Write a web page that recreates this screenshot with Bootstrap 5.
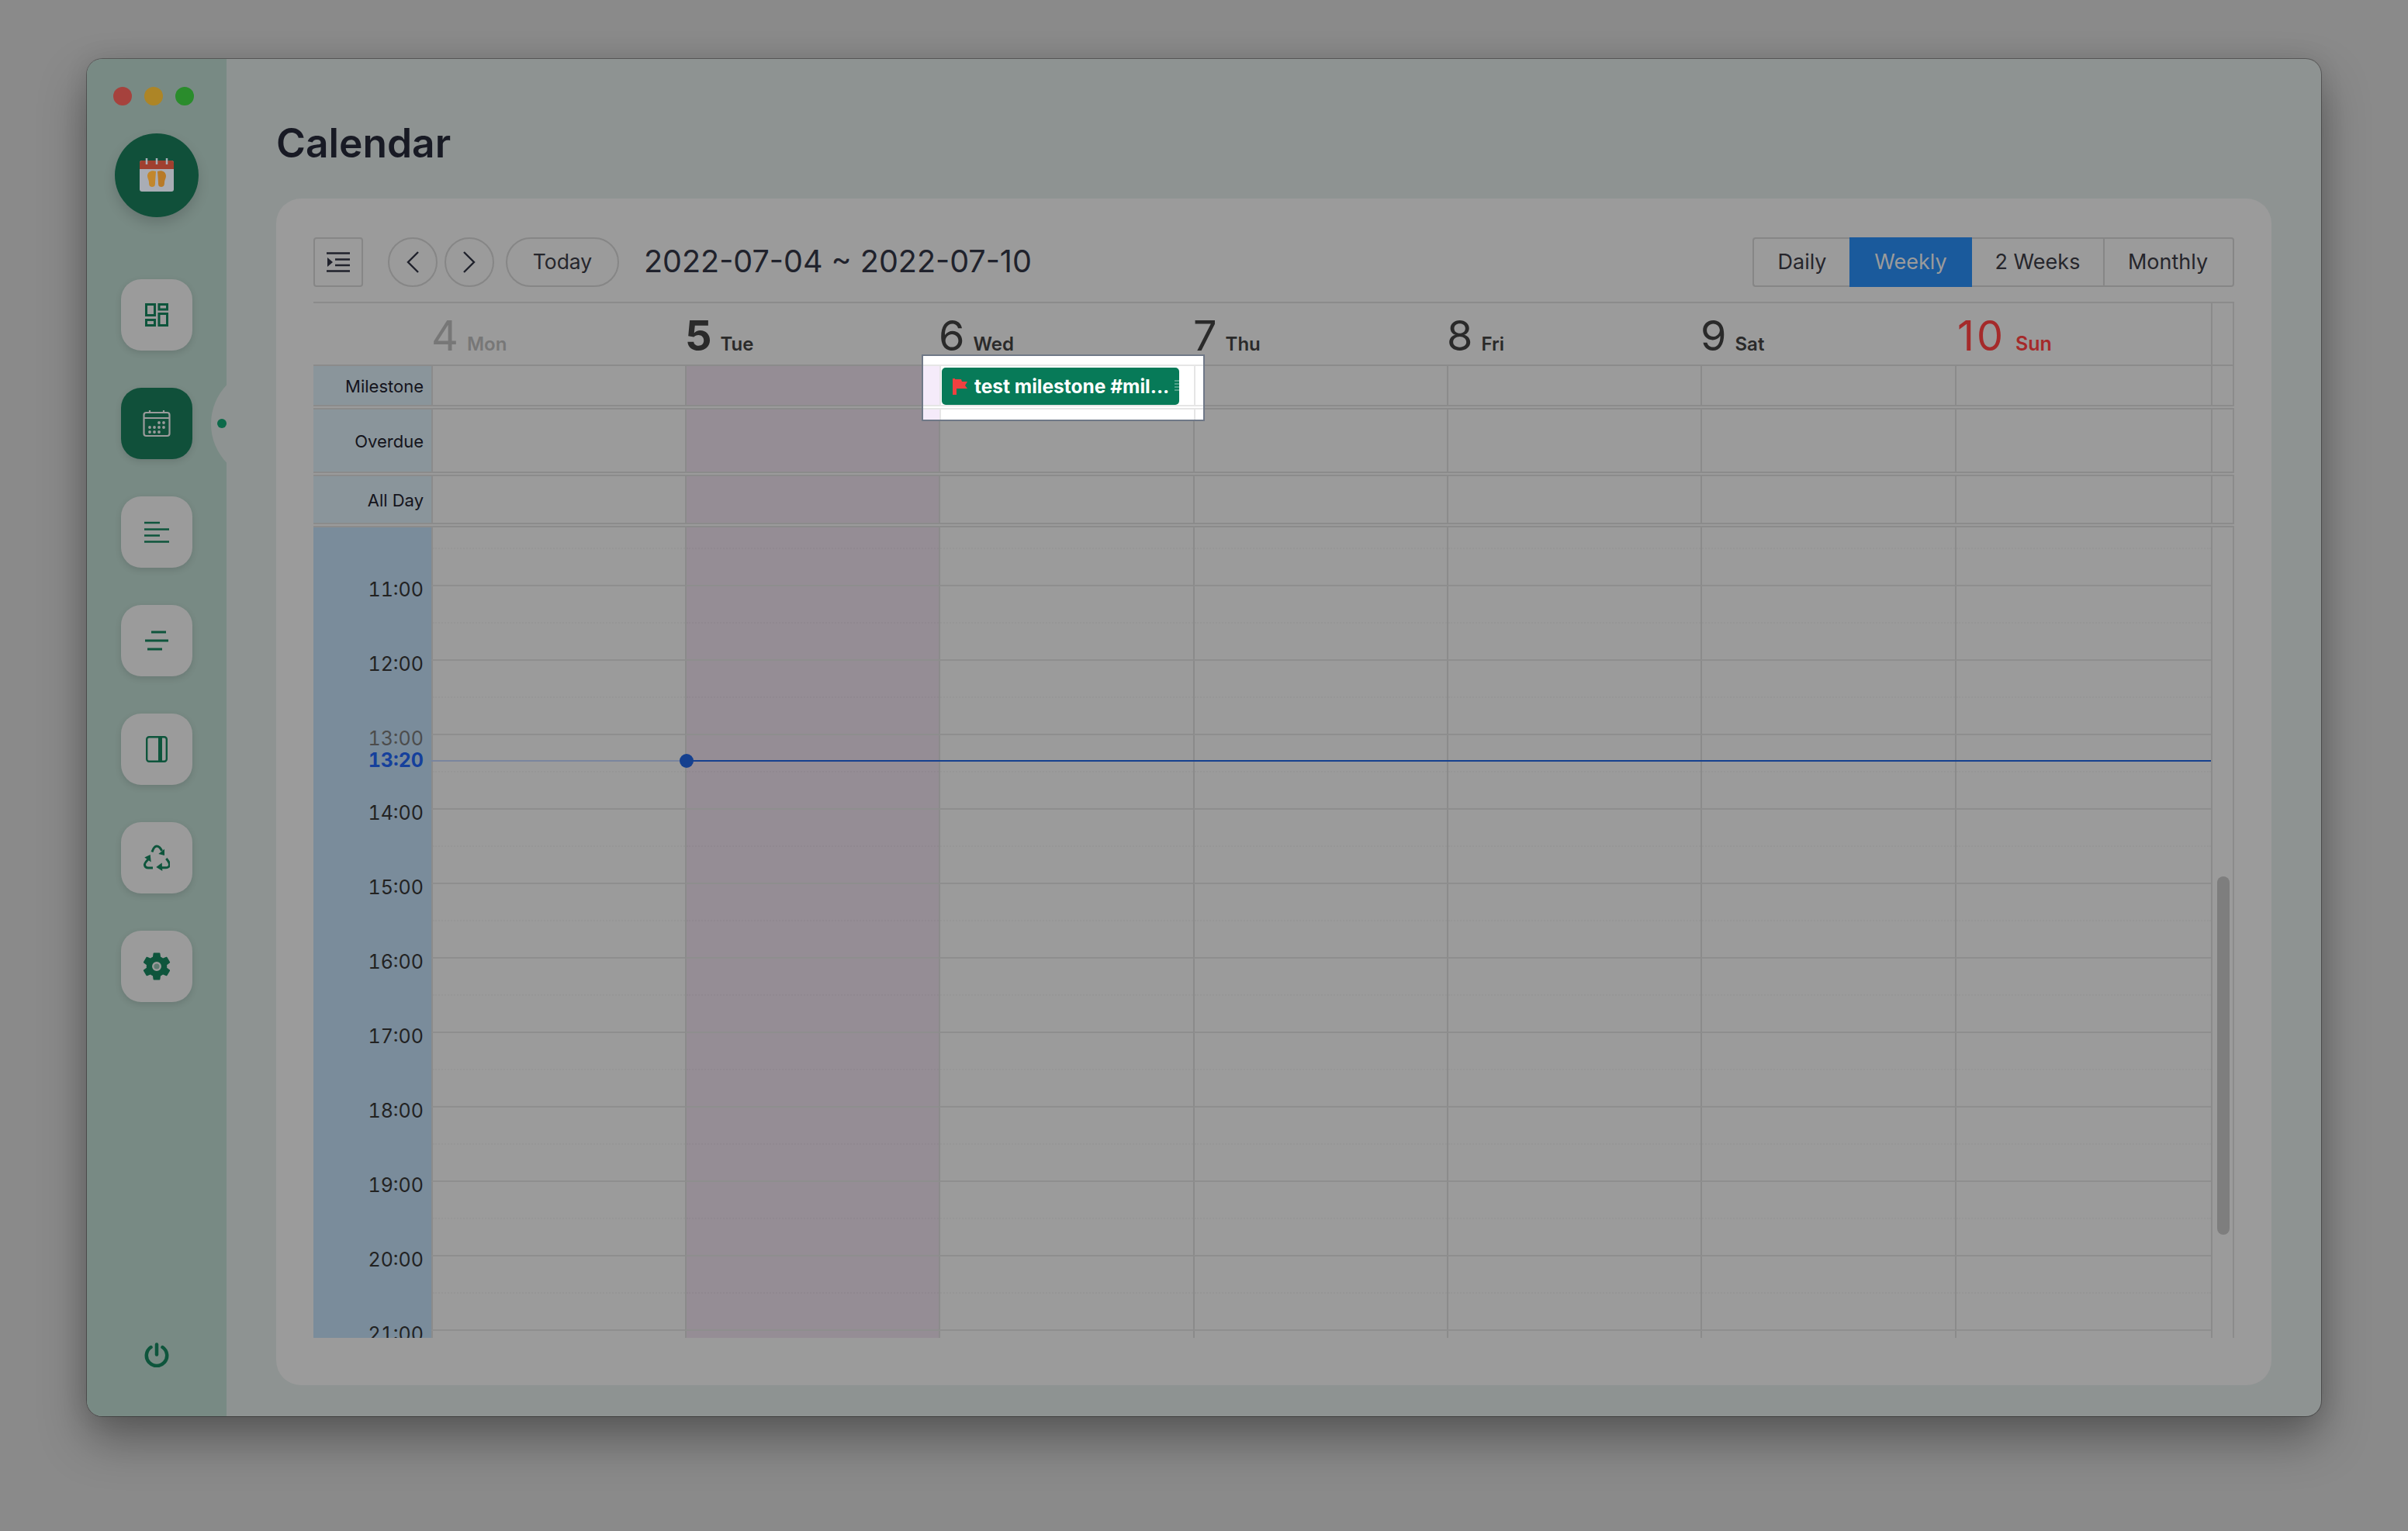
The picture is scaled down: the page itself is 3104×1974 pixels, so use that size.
<!DOCTYPE html>
<html lang="en">
<head>
  <meta charset="UTF-8">
  <title>Calendar</title>
  <link href="https://cdn.jsdelivr.net/npm/bootstrap@5.3.3/dist/css/bootstrap.min.css" rel="stylesheet">
  <style>
    :root { --cols: 152px 327px 327px 328px 327px 327px 328px 330px 30px; --line: #8b8b8b; --green: #0e553c; }
    html { height: 100%; overflow: hidden; }
    body { height: 100%; overflow: hidden; background: #8a8a8a; font-family: Inter, "Liberation Sans", sans-serif; color: #20222c; padding: 76px 112px 148px; }
    .app-window { height: 1750px; border-radius: 20px; overflow: hidden; background: #8e9392; box-shadow: 0 30px 60px rgba(0,0,0,.35), 0 0 30px rgba(0,0,0,.1), 0 0 0 1px rgba(0,0,0,.3); }
    .side-rail { width: 180px; background: #788a84; position: relative; overflow: hidden; padding-top: 36px; flex: none; }
    .light { width: 24px; height: 24px; border-radius: 50%; }
    .lights { margin-left: 34px; gap: 16px; }
    .app-logo { width: 108px; height: 108px; border-radius: 50%; background: #10503a; margin: 36px auto 0; box-shadow: 0 8px 16px rgba(0,0,0,.15); }
    .rail-nav { margin-top: 80px; gap: 48px; }
    .rail-btn { width: 92px; height: 92px; border-radius: 26px; background: #9b9b9b; box-shadow: 0 3px 8px rgba(0,0,0,.12); color: var(--green); }
    .rail-btn.on { background: #10503a; color: #9b9b9b; }
    .rail-bump { position: absolute; width: 145px; height: 145px; border-radius: 50%; background: #8e9392; left: 160px; top: 398px; }
    .rail-dot { position: absolute; width: 12px; height: 12px; border-radius: 50%; background: #0d6a4a; left: 168px; top: 464px; }
    .rail-power { margin-top: auto; padding-bottom: 63px; color: var(--green); }
    .main-pane { padding: 72px 64px 40px; min-width: 0; }
    .page-title { font-size: 51.5px; font-weight: 600; line-height: 70px; margin: 1px 0 37px; color: #181a24; }
    .cal-card { background: #9b9b9b; border-radius: 32px; padding: 50px 48px 61px; height: 1530px; }
    .tool-row { height: 64px; margin-bottom: 19px; }
    .tool-btn { height: 64px; border: 2px solid #868686; background: transparent; color: #20222c; padding: 0; display: flex; align-items: center; justify-content: center; }
    .tool-btn:hover { background: transparent; }
    .tool-side { width: 64px; border-radius: 4px; margin-right: 32px; }
    .tool-round { width: 64px; border-radius: 50%; margin-right: 9px; }
    .tool-today { width: 146px; border-radius: 32px; font-size: 26.5px; color: #26262c; margin: 0 32px 0 6px; }
    .range-title { font-size: 39.5px; font-weight: 400; margin: 0; color: #20222c; }
    .view-tabs .btn { font-size: 27px; height: 64px; padding: 0; margin: 0; border: 2px solid #868686; color: #26262c; background: transparent; border-radius: 4px; line-height: 58px; }
    .view-tabs .btn.active { background: #1a5a9c; border-color: #1a5a9c; color: #9b9b9b; }
    .tab-a { width: 126px; border-right: 0 !important; }
    .tab-b { width: 158px; }
    .tab-c { width: 171px; border-left: 0 !important; border-right: 0 !important; }
    .view-tabs .tab-d { width: 169px; padding-right: 2px; }
    .cal-head, .cal-band, .hour-row { display: grid; grid-template-columns: var(--cols); }
    .cal-head { height: 81px; border-top: 2px solid var(--line); }
    .day-head { display: flex; align-items: baseline; gap: 11px; padding-top: 11px; color: #2a2a2a; }
    .day-num { font-size: 54px; line-height: 62px; }
    .day-name { font-size: 24px; font-weight: 600; }
    .day-head.past { color: #777; }
    .day-head.today .day-num { font-weight: 700; }
    .day-head.sun { color: #a52a2a; padding-left: 3px; gap: 13px; }
    .day-head.sun .day-num { letter-spacing: 3px; }
    .day-head.sun .day-name { font-size: 25px; }
    .strip-cell { border-left: 2px solid var(--line); border-right: 2px solid var(--line); }
    .cal-band { border-top: 2px solid var(--line); border-bottom: 2px solid var(--line); margin-bottom: 2px; }
    .band-label { background: #8a959b; font-size: 22px; display: flex; align-items: center; justify-content: flex-end; padding: 3px 10px 0 0; color: #14141c; }
    .day-cell { border-left: 2px solid var(--line); }
    .day-cell.tue { background: #958d95; }
    .time-area { height: 1047px; overflow: hidden; position: relative; border-top: 2px solid var(--line); }
    .hour-row { height: 96px; }
    .hour-row.first { height: 76px; }
    .hour-row .day-cell { border-bottom: 2px solid #8e8e8e; }
    .half-mark { height: 48px; border-bottom: 2px dotted rgba(0,0,0,.03); }
    .first .half-mark { height: 28px; }
    .hour-label { background: #7a8c9b; font-size: 25px; font-variant-numeric: tabular-nums; text-align: right; padding-right: 10px; color: #222; }
    .hour-label span { display: block; line-height: 30px; margin-top: -11px; }
    .hour-label .dim { color: #4c4c4c; }
    .now-line { position: absolute; left: 152px; right: 30px; top: 300px; height: 2px; background: linear-gradient(to right, #7a859e 0 327px, #15408f 327px); }
    .now-dot { position: absolute; left: 472px; top: 292px; width: 18px; height: 18px; border-radius: 50%; background: #15408f; }
    .now-label { position: absolute; right: calc(100% - 142px); top: 285px; font-size: 25px; font-variant-numeric: tabular-nums; line-height: 30px; font-weight: 700; color: #15409c; }
    .scroll-thumb { position: absolute; left: 2454px; top: 450px; width: 16px; height: 462px; border-radius: 8px; background: #7e7e7e; }
    .cal-wrap { position: relative; }
    .spot-box { position: absolute; left: 784px; top: 68px; width: 365px; height: 86px; border: 2px solid #6f7887; background: #fff; padding-top: 11px; }
    .spot-row { display: grid; grid-template-columns: 21px 328px 12px; border-top: 2px solid #e6e6e6; border-bottom: 2px solid #e6e6e6; height: 54px; margin-bottom: 2px; }
    .spot-tail { display: grid; grid-template-columns: 21px 328px 12px; border-top: 2px solid #e6e6e6; height: 15px; }
    .spot-cell { border-left: 2px solid #e6e6e6; }
    .spot-tint { background: #f5ebfa; }
    .chip { width: 306px; height: 48px; margin: 2px 0 0 1px; background: #077a58; color: #fff; border-radius: 5px; font-size: 24.5px; font-weight: 700; line-height: 48px; padding-left: 13px; gap: 8px; position: relative; white-space: nowrap; }
    .chip-grip { position: absolute; right: 0; top: 16px; width: 6px; height: 16px; background: repeating-linear-gradient(to bottom, rgba(255,255,255,.3) 0 2px, transparent 2px 4px); }
  </style>
</head>
<body>

<div class="app-window d-flex">
  <div class="side-rail d-flex flex-column">
    <div class="lights d-flex">
      <div class="light" style="background:#a6423d"></div>
      <div class="light" style="background:#ad8526"></div>
      <div class="light" style="background:#2a8c2c"></div>
    </div>
    <div class="app-logo d-flex align-items-center justify-content-center">
      <svg width="46" height="44" viewBox="0 0 46 44">
        <rect x="1" y="3" width="44" height="40" rx="3" fill="#a9adb5"/>
        <path d="M1 14V6a3 3 0 0 1 3-3h38a3 3 0 0 1 3 3v8z" fill="#a0402f"/>
        <path d="M10 0v8M23 0v8M36 0v8" stroke="#a9adb5" stroke-width="2.500"/>
        <path d="M22 17c-6-2-11 1-11 6 0 3 2 5 2 8 0 2 0 6 4 6s4-3 4-6z" fill="#c2872c"/>
        <path d="M24 17c6-2 11 1 11 6 0 3-2 5-2 8 0 2 0 6-4 6s-4-3-4-6z" fill="#b87a28"/>
      </svg>
    </div>
    <div class="rail-bump"></div>
    <div class="rail-dot"></div>
    <div class="rail-nav d-flex flex-column align-items-center">
      <div class="rail-btn d-flex align-items-center justify-content-center">
        <svg width="30" height="30" viewBox="0 0 30 30" fill="none" stroke="currentColor" stroke-width="3"><rect x="1.500" y="1.500" width="11" height="14"/><rect x="18" y="1.500" width="10.500" height="6.500"/><rect x="1.500" y="21.500" width="11" height="7"/><rect x="18" y="13.500" width="10.500" height="15"/></svg>
      </div>
      <div class="rail-btn on d-flex align-items-center justify-content-center">
        <svg width="36" height="36" viewBox="0 0 36 36" fill="none" stroke="currentColor" stroke-width="2.200"><rect x="1.500" y="4" width="33" height="30" rx="3"/><path d="M1.500 11h33M9 1v4M27 1v4"/><g fill="currentColor" stroke="none"><circle cx="21" cy="17" r="1.900"/><circle cx="27" cy="17" r="1.900"/><circle cx="9" cy="23" r="1.900"/><circle cx="15" cy="23" r="1.900"/><circle cx="21" cy="23" r="1.900"/><circle cx="27" cy="23" r="1.900"/><circle cx="9" cy="29" r="1.900"/><circle cx="15" cy="29" r="1.900"/><circle cx="21" cy="29" r="1.900"/></g></svg>
      </div>
      <div class="rail-btn d-flex align-items-center justify-content-center">
        <svg width="32" height="28" viewBox="0 0 32 28" stroke="currentColor" stroke-width="2.500"><path d="M0 2h20M0 10.500h32M0 18.500h20M0 26.500h32"/></svg>
      </div>
      <div class="rail-btn d-flex align-items-center justify-content-center">
        <svg width="30" height="26" viewBox="0 0 30 26" stroke="currentColor" stroke-width="3"><path d="M8 2h19M0 13h30M3 24h19"/></svg>
      </div>
      <div class="rail-btn d-flex align-items-center justify-content-center">
        <svg width="28" height="34" viewBox="0 0 28 34" fill="none" stroke="currentColor" stroke-width="2.400"><rect x="1.200" y="1.200" width="25.600" height="31.600" rx="3"/><path d="M18.500 1v32" stroke-width="5"/></svg>
      </div>
      <div class="rail-btn d-flex align-items-center justify-content-center">
        <svg width="34" height="34" viewBox="0 0 34 34" fill="none" stroke="currentColor" stroke-width="3"><path d="M11 9.500C12.500 5 14.500 2 17 2c3 0 5 2.500 6.700 6"/><path d="M27 5.700V14l-7.700-2z" fill="currentColor" stroke="none"/><path d="M6 19c-3 3-5 5-4.500 7.500.5 2.500 2.500 3.500 4.500 3.500h6"/><path d="M1.300 16.400L8.700 13l1 9.500z" fill="currentColor" stroke="none"/><path d="M24 29.800h5c3 0 4.700-2 4.500-4.300-.2-2.300-2-5-4.200-7.500"/><path d="M16.300 29l7.400-5.500.6 10.500z" fill="currentColor" stroke="none"/></svg>
      </div>
      <div class="rail-btn d-flex align-items-center justify-content-center">
        <svg width="44" height="44" viewBox="0 0 24 24"><path fill="currentColor" d="M19.140 12.940c.04-.3.06-.61.06-.94 0-.32-.02-.64-.07-.94l2.030-1.580a.49.49 0 0 0 .12-.61l-1.920-3.320a.488.488 0 0 0-.59-.22l-2.390.96c-.5-.38-1.030-.7-1.620-.94l-.36-2.540a.484.484 0 0 0-.48-.41h-3.840c-.24 0-.43.17-.47.41l-.36 2.540c-.59.24-1.130.57-1.620.94l-2.390-.96c-.22-.08-.47 0-.59.22L2.740 8.870c-.12.21-.08.47.12.61l2.030 1.580c-.05.3-.09.63-.09.94s.02.64.07.94l-2.030 1.580a.49.49 0 0 0-.12.61l1.920 3.320c.12.22.37.29.59.22l2.390-.96c.5.38 1.030.7 1.620.94l.36 2.540c.05.24.24.41.48.41h3.840c.24 0 .44-.17.47-.41l.36-2.540c.59-.24 1.130-.56 1.620-.94l2.390.96c.22.08.47 0 .59-.22l1.920-3.320c.12-.22.07-.47-.12-.61z"/><circle cx="12" cy="12" r="2.600" fill="#5d7b70" stroke="#9b9b9b" stroke-width="1.300"/></svg>
      </div>
    </div>
    <div class="rail-power d-flex justify-content-center">
      <svg width="32" height="32" viewBox="0 0 32 32" fill="none" stroke="currentColor" stroke-width="4.500" stroke-linecap="round"><path d="M16 2.500v13"/><path d="M8.500 6a13.200 13.200 0 1 0 15 0"/></svg>
    </div>
  </div>

  <div class="main-pane flex-grow-1">
    <h1 class="page-title">Calendar</h1>
    <div class="cal-card">
      <div class="tool-row d-flex align-items-center">
        <button class="btn tool-btn tool-side">
          <svg width="30" height="26" viewBox="0 0 30 26" stroke="currentColor" stroke-width="2.600"><path d="M0 1.500h30M11 9.500h19M11 17h19M0 24.500h30"/><path d="M1 7l7 6-7 6z" fill="currentColor" stroke="none"/></svg>
        </button>
        <button class="btn tool-btn tool-round">
          <svg width="18" height="28" viewBox="0 0 18 28" fill="none" stroke="currentColor" stroke-width="2.400"><path d="M16 1L3 14l13 13"/></svg>
        </button>
        <button class="btn tool-btn tool-round">
          <svg width="18" height="28" viewBox="0 0 18 28" fill="none" stroke="currentColor" stroke-width="2.400"><path d="M2 1l13 13L2 27"/></svg>
        </button>
        <button class="btn tool-btn tool-today">Today</button>
        <h2 class="range-title">2022-07-04 ~ 2022-07-10</h2>
        <div class="btn-group view-tabs ms-auto">
          <button class="btn tab-a">Daily</button>
          <button class="btn tab-b active">Weekly</button>
          <button class="btn tab-c">2 Weeks</button>
          <button class="btn tab-d">Monthly</button>
        </div>
      </div>

      <div class="cal-wrap">
        <div class="cal-head" id="calHead"></div>
        <div id="calBands"></div>
        <div class="time-area" id="timeArea">
          <div class="now-line"></div>
          <div class="now-dot"></div>
          <div class="now-label">13:20</div>
          <div class="scroll-thumb"></div>
        </div>

        <div class="spot-box">
          <div class="spot-row">
            <div class="spot-tint"></div>
            <div class="spot-cell">
              <div class="chip d-flex align-items-center">
                <svg width="21" height="22" viewBox="0 0 21 22"><path d="M1 1h3v1h8l1 3h7l-3 5 3 4H6v8H1z" fill="#f04040"/></svg>
                <span>test milestone #mil...</span>
                <div class="chip-grip"></div>
              </div>
            </div>
            <div class="spot-cell"></div>
          </div>
          <div class="spot-tail">
            <div class="spot-tint"></div>
            <div class="spot-cell"></div>
            <div class="spot-cell"></div>
          </div>
        </div>
      </div>
    </div>
  </div>
</div>

<script src="https://cdn.jsdelivr.net/npm/bootstrap@5.3.3/dist/js/bootstrap.bundle.min.js"></script>
<script>
  const days = [['4', 'Mon'], ['5', 'Tue'], ['6', 'Wed'], ['7', 'Thu'], ['8', 'Fri'], ['9', 'Sat'], ['10', 'Sun']];

  function dayCells(inner) {
    return days.map(d => `<div class="day-cell ${d[1] === 'Tue' ? 'tue' : ''}">${inner}</div>`).join('');
  }

  document.getElementById('calHead').innerHTML = '<div></div>' + days.map(d => {
    const cls = d[1] === 'Mon' ? 'past' : d[1] === 'Tue' ? 'today' : d[1] === 'Sun' ? 'sun' : '';
    return `<div class="day-head ${cls}"><span class="day-num">${d[0]}</span><span class="day-name">${d[1]}</span></div>`;
  }).join('') + '<div class="strip-cell"></div>';

  document.getElementById('calBands').innerHTML = [['Milestone', 54], ['Overdue', 84], ['All Day', 64]].map(b =>
    `<div class="cal-band" style="height:${b[1]}px"><div class="band-label">${b[0]}</div>${dayCells('')}<div class="strip-cell"></div></div>`
  ).join('');

  const area = document.getElementById('timeArea');
  let rows = `<div class="hour-row first"><div class="hour-label"></div>${dayCells('<div class="half-mark"></div>')}<div class="strip-cell"></div></div>`;
  for (let h = 11; h <= 21; h++) {
    const dim = h === 13 ? 'dim' : '';
    rows += `<div class="hour-row"><div class="hour-label"><span class="${dim}">${h}:00</span></div>${dayCells('<div class="half-mark"></div>')}<div class="strip-cell"></div></div>`;
  }
  area.insertAdjacentHTML('afterbegin', rows);
</script>

</body>
</html>
